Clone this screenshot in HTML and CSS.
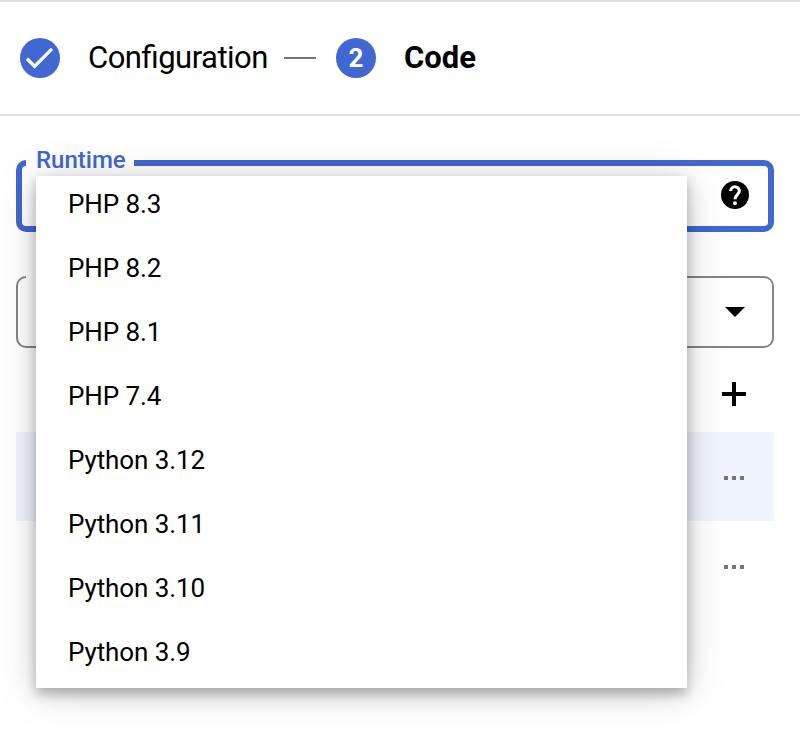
FILE: index.html
```
<!DOCTYPE html>
<html lang="en">
<head>
<meta charset="utf-8">
<title>Code</title>
<link rel="stylesheet" href="styles.css">
</head>
<body>
<header class="stepper">
  <div class="step">
    <svg class="badge" viewBox="0 0 40 40"><path fill="#fff" stroke="#fff" stroke-width=".3" transform="translate(.8 1.4) scale(1.53)" d="M9 16.17L4.83 12l-1.42 1.41L9 19 21 7l-1.41-1.41z"/></svg>
    <span class="step-label">Configuration</span>
  </div>
  <span class="connector"></span>
  <div class="step">
    <span class="badge">2</span>
    <span class="step-label current">Code</span>
  </div>
</header>
<main class="content">
  <div class="field focused">
    <span class="lead"></span><span class="notch">Runtime</span>
    <span class="trail"><svg class="help" viewBox="2 2 20 20"><circle cx="12" cy="12" r="10"/><path fill="none" stroke="#fff" stroke-width="2.2" d="M8.9 9.2a3.1 3.1 0 1 1 6.2 0c0 2.4-3.1 2.7-3.1 5.8"/><circle fill="#fff" cx="12" cy="17.9" r="1.4"/></svg></span>
    <ul class="menu">
      <li>PHP 8.3</li>
      <li>PHP 8.2</li>
      <li>PHP 8.1</li>
      <li>PHP 7.4</li>
      <li>Python 3.12</li>
      <li>Python 3.11</li>
      <li>Python 3.10</li>
      <li>Python 3.9</li>
    </ul>
  </div>
  <div class="field">
    <span class="lead"></span><span class="notch"></span>
    <span class="trail"><svg class="caret" viewBox="0 0 20 10"><path d="M0 0h20L10 10z"/></svg></span>
  </div>
  <div class="toolbar"><svg class="plus" viewBox="0 0 24 24"><path d="M10 0h4v10h10v4H14v10h-4V14H0v-4h10z"/></svg></div>
  <div class="row selected"><span class="dots"><i></i><i></i><i></i></span></div>
  <div class="row"><span class="dots"><i></i><i></i><i></i></span></div>
</main>
</body>
</html>
```
FILE: styles.css
```
* { box-sizing: border-box; }
body {
  margin: 0;
  height: 730px;
  overflow: hidden;
  background: #fff;
  color: #000;
  font-family: Roboto, sans-serif;
}
svg { display: block; }
.stepper {
  display: flex;
  align-items: center;
  height: 116px;
  padding: 0 20px;
  border-top: 2px solid #e0e0e0;
  border-bottom: 2px solid #e0e0e0;
}
.step { display: flex; align-items: center; gap: 28px; }
.badge {
  width: 40px;
  height: 40px;
  border-radius: 50%;
  background: #4067d2;
  color: #fff;
  font-size: 26px;
  font-weight: 700;
  line-height: 40px;
  text-align: center;
}
.step-label {
  width: 180px;
  font-size: 31px;
  line-height: 40px;
  letter-spacing: -.5px;
  font-feature-settings: "liga" 1;
}
.current { font-weight: 700; letter-spacing: 0; }
.connector { width: 32px; height: 2px; margin: 0 20px 0 16px; background: #757575; }
.content { padding: 44px 26px 0 16px; }
.field {
  --edge: 2px solid #80868b;
  position: relative;
  display: flex;
  height: 72px;
  margin-bottom: 44px;
}
.focused { --edge: 6px solid #4067d2; z-index: 1; }
.lead {
  width: 10px;
  border: var(--edge);
  border-right: 0;
  border-radius: 10px 0 0 10px;
}
.notch {
  width: 108px;
  padding-left: 10px;
  border-bottom: var(--edge);
  color: #4067d2;
  font-size: 24px;
  font-weight: 500;
  line-height: 28px;
}
.focused .notch { margin-top: -14px; }
.trail {
  flex: 1;
  display: flex;
  align-items: center;
  justify-content: flex-end;
  border: var(--edge);
  border-left: 0;
  border-radius: 0 10px 10px 0;
}
.help { width: 28px; height: 28px; margin: 0 19px 2px 0; }
.caret { width: 20px; height: 10px; margin-right: 27px; }
.menu {
  position: absolute;
  left: 20px;
  top: 16px;
  width: 651px;
  height: 512px;
  margin: 0;
  padding: 0;
  list-style: none;
  background: #fff;
  box-shadow: 0 4px 44px rgba(0, 0, 0, .12), 0 5px 22px rgba(0, 0, 0, .15), 0 6px 10px rgba(0, 0, 0, .2);
}
.menu li {
  height: 64px;
  padding: 0 32px;
  font-size: 26px;
  line-height: 56px;
  letter-spacing: -.1px;
}
.toolbar, .row { display: flex; justify-content: flex-end; }
.toolbar { height: 50px; margin-top: -10px; padding-right: 28px; }
.plus { width: 24px; height: 24px; }
.row { height: 89px; padding: 44px 30px 0 0; }
.selected { background: #f0f4fd; }
.dots { display: flex; gap: 4px; }
.dots i { width: 4px; height: 4px; background: #757575; }
```
